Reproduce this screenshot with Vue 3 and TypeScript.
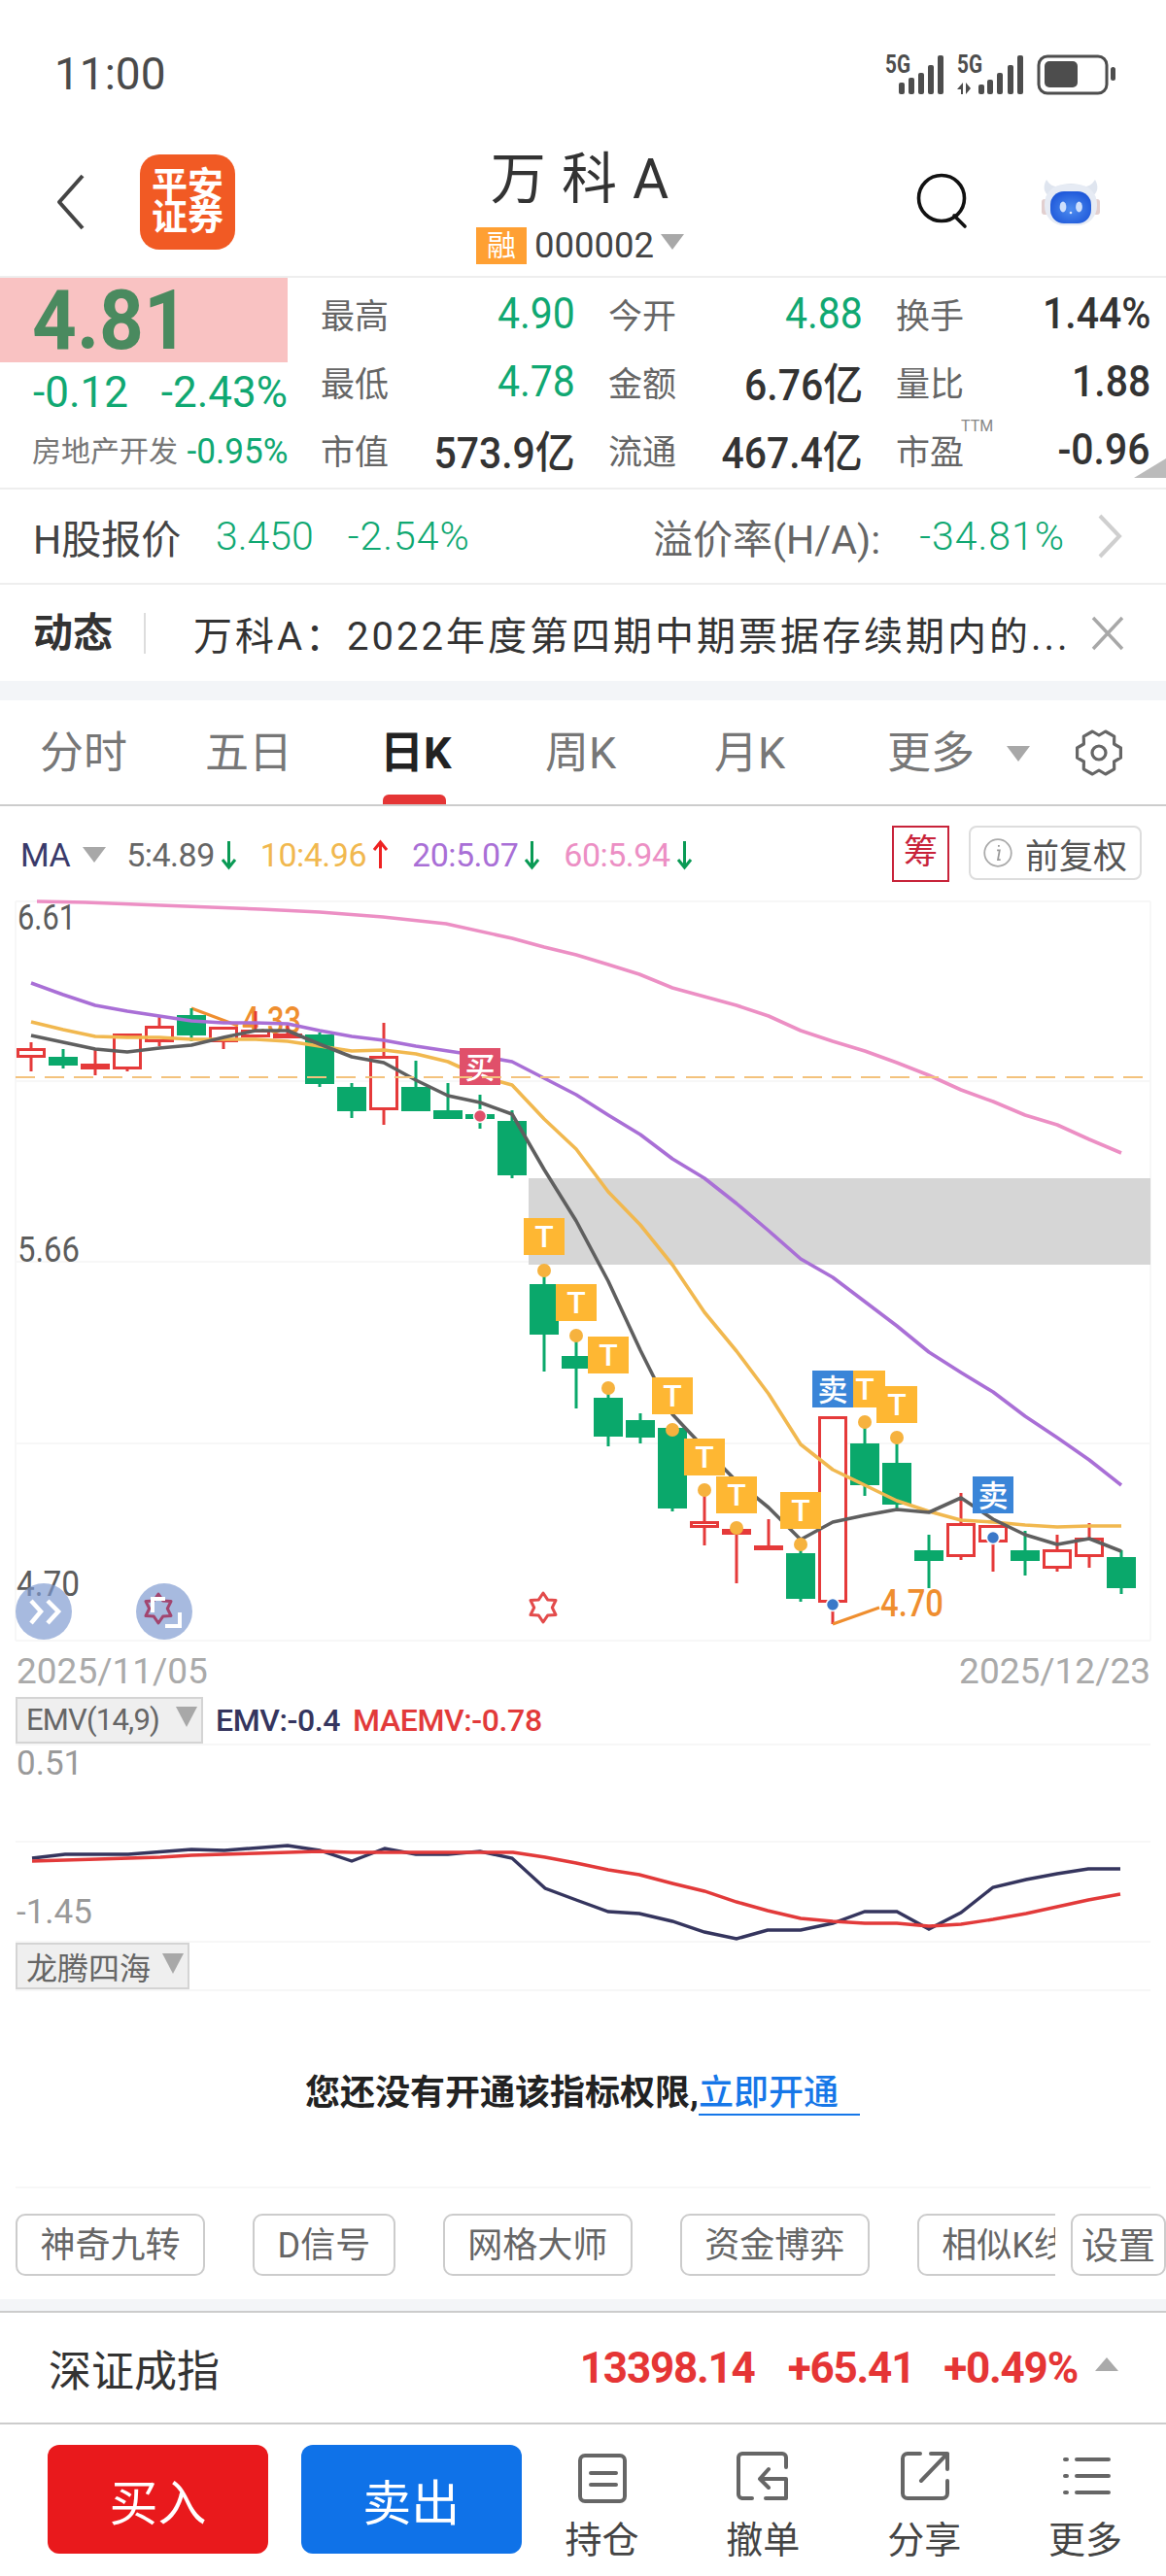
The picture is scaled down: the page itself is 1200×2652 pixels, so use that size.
<script setup lang="ts">
type Candle = [number, number, number, number, 'r' | 'g'];

const xOf = (i: number) => 32 + 33 * i;

// wick top, body top, body bottom, wick bottom
const candles: Candle[] = [
  [1073, 1079, 1089, 1103, 'r'],
  [1080, 1088, 1097, 1100, 'g'],
  [1081, 1095, 1101, 1107, 'r'],
  [1064, 1064, 1101, 1103, 'r'],
  [1047, 1056, 1073, 1077, 'r'],
  [1038, 1045, 1066, 1072, 'g'],
  [1057, 1057, 1073, 1080, 'r'],
  [1041, 1060, 1068, 1068, 'r'],
  [1053, 1064, 1069, 1069, 'r'],
  [1063, 1065, 1116, 1119, 'g'],
  [1115, 1119, 1144, 1151, 'g'],
  [1053, 1087, 1143, 1158, 'r'],
  [1092, 1119, 1144, 1144, 'g'],
  [1115, 1143, 1152, 1152, 'g'],
  [1127, 1147, 1152, 1162, 'g'],
  [1143, 1154, 1210, 1213, 'g'],
  [1313, 1322, 1374, 1412, 'g'],
  [1380, 1396, 1409, 1450, 'g'],
  [1435, 1439, 1479, 1489, 'g'],
  [1455, 1462, 1480, 1486, 'g'],
  [1470, 1470, 1553, 1556, 'g'],
  [1539, 1566, 1573, 1591, 'r'],
  [1573, 1574, 1580, 1630, 'r'],
  [1564, 1591, 1596, 1596, 'r'],
  [1594, 1599, 1646, 1649, 'g'],
  [1458, 1458, 1650, 1672, 'r'],
  [1468, 1486, 1529, 1540, 'g'],
  [1485, 1506, 1549, 1553, 'g'],
  [1580, 1596, 1607, 1635, 'g'],
  [1537, 1568, 1603, 1606, 'r'],
  [1570, 1570, 1588, 1618, 'r'],
  [1576, 1596, 1607, 1622, 'g'],
  [1580, 1595, 1615, 1618, 'r'],
  [1568, 1583, 1603, 1614, 'r'],
  [1596, 1603, 1635, 1641, 'g'],
];

const ma5 = [1066, 1073, 1080, 1083, 1079, 1076, 1068, 1061, 1061, 1075, 1088, 1094, 1112, 1128, 1135, 1147, 1204, 1257, 1319, 1390, 1456, 1491, 1525, 1552, 1585, 1567, 1560, 1554, 1557, 1542, 1564, 1580, 1590, 1584, 1597];
const ma10 = [1052, 1060, 1067, 1068, 1068, 1070, 1070, 1070, 1072, 1077, 1082, 1081, 1085, 1093, 1108, 1117, 1152, 1183, 1227, 1261, 1302, 1351, 1391, 1435, 1487, 1513, 1529, 1545, 1556, 1565, 1567, 1570, 1572, 1571, 1571];
const ma20 = [1012, 1024, 1035, 1041, 1046, 1051, 1053, 1053, 1054, 1061, 1067, 1071, 1077, 1082, 1087, 1093, 1110, 1127, 1148, 1168, 1193, 1213, 1239, 1267, 1296, 1315, 1340, 1365, 1392, 1413, 1433, 1458, 1480, 1503, 1529];
const ma60 = [
  [38, 928], [88, 929], [165, 932], [191, 933], [268, 936], [329, 939], [394, 944], [459, 951], [527, 966], [560, 975],
  [593, 983], [626, 993], [658, 1003], [692, 1017], [725, 1026], [758, 1035], [791, 1046], [824, 1061], [857, 1072],
  [890, 1082], [923, 1094], [956, 1107], [989, 1122], [1022, 1134], [1055, 1148], [1088, 1158], [1121, 1173], [1154, 1187],
];

const seriesPts = (ys: number[]) => ys.map((y, i) => `${xOf(i)},${y}`).join(' ');
const pairPts = (pts: number[][]) => pts.map((p) => p.join(',')).join(' ');

const maLines = [
  { color: '#ec8fc4', pts: pairPts(ma60) },
  { color: '#a96fd6', pts: seriesPts(ma20) },
  { color: '#f1b84f', pts: seriesPts(ma10) },
  { color: '#5f5f5f', pts: seriesPts(ma5) },
];

const tBadges = [
  [16, 1254], [17, 1322], [18, 1376], [20, 1418], [21, 1481], [22, 1520], [24, 1536], [26, 1411], [27, 1427],
];
const tDots = [
  [16, 1308], [17, 1375], [18, 1429], [20, 1472], [21, 1534], [22, 1573], [24, 1590], [26, 1464], [27, 1480],
];
const sellBadges = [
  [25, 1411], [30, 1520],
];

const emvLine = [
  [33, 1913], [67, 1909], [132, 1909], [197, 1904], [231, 1905], [296, 1900], [329, 1905], [362, 1916], [396, 1903], [428, 1909],
  [461, 1909], [494, 1906], [527, 1913], [561, 1944], [593, 1956], [626, 1968], [658, 1970], [692, 1978], [725, 1989], [758, 1996],
  [790, 1987], [824, 1987], [857, 1980], [890, 1968], [923, 1968], [956, 1986], [989, 1969], [1022, 1943], [1056, 1935], [1088, 1929],
  [1120, 1924], [1153, 1924],
];
const maemvLine = [
  [33, 1916], [100, 1914], [165, 1912], [197, 1910], [264, 1908], [329, 1906], [362, 1907], [528, 1907], [561, 1912], [593, 1918],
  [626, 1925], [658, 1930], [692, 1939], [725, 1947], [758, 1958], [790, 1967], [824, 1975], [857, 1978], [890, 1980], [923, 1980],
  [956, 1983], [989, 1981], [1022, 1976], [1056, 1970], [1088, 1963], [1120, 1956], [1153, 1950],
];

const polar = (cx: number, cy: number, r: number, deg: number) => {
  const a = (deg * Math.PI) / 180;
  return `${(cx + r * Math.cos(a)).toFixed(1)},${(cy + r * Math.sin(a)).toFixed(1)}`;
};

// six flat lobes with a notch between them
const gearPts = Array.from({ length: 6 }, (_, k) => {
  const deg = k * 60;
  return [polar(25, 25, 23, deg - 13), polar(25, 25, 23, deg + 13), polar(25, 25, 18, deg + 30)].join(' ');
}).join(' ');

const starPts = (cx: number, cy: number, r: number) =>
  Array.from({ length: 12 }, (_, i) => polar(cx, cy, i % 2 === 0 ? r : r * 0.62, i * 30 - 90)).join(' ');

const quoteRows = [
  { label: '最高', value: '4.90', cls: 'green' },
  { label: '今开', value: '4.88', cls: 'green' },
  { label: '换手', value: '1.44%', cls: 'dark' },
  { label: '最低', value: '4.78', cls: 'green' },
  { label: '金额', value: '6.76亿', cls: 'dark' },
  { label: '量比', value: '1.88', cls: 'dark' },
  { label: '市值', value: '573.9亿', cls: 'dark' },
  { label: '流通', value: '467.4亿', cls: 'dark' },
  { label: '市盈', value: '-0.96', cls: 'dark', ttm: true },
];

const maItems = [
  { text: '5:4.89', color: '#666666', up: false },
  { text: '10:4.96', color: '#f1b84f', up: true },
  { text: '20:5.07', color: '#a96fd6', up: false },
  { text: '60:5.94', color: '#ec8fc4', up: false },
];

const tabs = ['分时', '五日', '日K', '周K', '月K'];
const tools = ['神奇九转', 'D信号', '网格大师', '资金博弈', '相似K线'];
</script>

<template>
  <div class="page">
    <div class="status">
      <span class="time">11:00</span>
      <svg class="status-icons" width="250" height="60" viewBox="905 45 250 60">
        <g fill="#4d4d4d">
          <text x="911" y="75" class="net" textLength="26" lengthAdjust="spacingAndGlyphs">5G</text>
          <rect x="925" y="85" width="6" height="12" rx="2" />
          <rect x="935" y="80" width="6" height="17" rx="2" />
          <rect x="945" y="75" width="6" height="22" rx="2" />
          <rect x="955" y="67" width="6" height="30" rx="2" />
          <rect x="965" y="57" width="6" height="40" rx="2" />
          <text x="985" y="75" class="net" textLength="26" lengthAdjust="spacingAndGlyphs">5G</text>
          <path d="M991 85v12h-2v-5h-4zM994 85l5 6-5 6z" />
          <rect x="1007" y="87" width="6" height="10" rx="2" />
          <rect x="1016" y="82" width="6" height="15" rx="2" />
          <rect x="1026" y="75" width="6" height="22" rx="2" />
          <rect x="1037" y="67" width="6" height="30" rx="2" />
          <rect x="1047" y="57" width="6" height="40" rx="2" />
          <rect x="1069" y="58" width="70" height="38" rx="9" fill="none" stroke="#4d4d4d" stroke-width="3" />
          <rect x="1075" y="63" width="34" height="27" rx="5" />
          <rect x="1143" y="69" width="5" height="14" rx="2.5" />
        </g>
      </svg>
    </div>

    <header class="head">
      <div class="head-left">
        <svg width="34" height="60" viewBox="0 0 34 60">
          <path d="M30 3 L6 30 L30 57" fill="none" stroke="#444" stroke-width="4" stroke-linejoin="round" />
        </svg>
        <div class="logo">平安<br />证券</div>
      </div>
      <div class="head-mid">
        <div class="title">万 科 A</div>
        <div class="code-row">
          <span class="rong">融</span>
          <span class="code">000002</span>
          <i class="tri" />
        </div>
      </div>
      <div class="head-right">
        <svg width="60" height="60" viewBox="0 0 60 60">
          <circle cx="28" cy="26" r="23.5" fill="none" stroke="#111" stroke-width="3.6" />
          <path d="M41 44 L52 55" stroke="#111" stroke-width="3.6" stroke-linecap="round" />
        </svg>
        <svg class="robot" width="60" height="50" viewBox="0 0 60 50">
          <defs>
            <radialGradient id="visor" cx="50%" cy="55%" r="60%">
              <stop offset="0%" stop-color="#4f8ef0" />
              <stop offset="100%" stop-color="#1c55d8" />
            </radialGradient>
          </defs>
          <path d="M5 2 C1 9 2 15 8 19 L52 19 C58 15 59 9 55 2 C51 8 48 9 44 9 C36 5 24 5 16 9 C12 9 9 8 5 2Z" fill="#dfe5ef" />
          <rect x="0" y="22" width="7" height="16" rx="3" fill="#e2cfcf" />
          <rect x="53" y="22" width="7" height="16" rx="3" fill="#e2cfcf" />
          <rect x="3" y="7" width="54" height="42" rx="20" fill="#e6ebf4" />
          <rect x="9" y="14" width="42" height="33" rx="14" fill="url(#visor)" />
          <ellipse cx="22" cy="30" rx="3.4" ry="5.4" fill="#cfe0fc" />
          <ellipse cx="38.5" cy="30" rx="3.4" ry="5.4" fill="#cfe0fc" />
          <circle cx="30" cy="36" r="1.3" fill="#dce8fd" />
        </svg>
      </div>
    </header>

    <section class="quote">
      <div class="quote-left">
        <div class="price"><span>4.81</span></div>
        <div class="change green"><span>-0.12</span><span>-2.43%</span></div>
        <div class="sector"><span>房地产开发</span><span class="n sector-num green">-0.95%</span></div>
      </div>
      <div class="quote-grid">
        <div v-for="row in quoteRows" :key="row.label" class="cell">
          <span class="label">{{ row.label }}<sup v-if="row.ttm" class="ttm">TTM</sup></span>
          <span class="n" :class="row.cls">{{ row.value }}</span>
        </div>
      </div>
      <i class="corner" />
    </section>

    <div class="hrow">
      <span class="h-name">H股报价</span>
      <span class="h-num green">3.450</span>
      <span class="h-num wide green second">-2.54%</span>
      <span class="premium">溢价率(H/A):</span>
      <span class="h-num wide green last">-34.81%</span>
      <svg width="28" height="46" viewBox="0 0 28 46">
        <path d="M3 2 L23 23 L3 44" fill="none" stroke="#cfcfcf" stroke-width="4" />
      </svg>
    </div>

    <div class="news">
      <span class="news-tag">动态</span>
      <span class="news-text">万科A：2022年度第四期中期票据存续期内的...</span>
      <svg width="34" height="36" viewBox="0 0 34 36">
        <path d="M2 2 L32 34 M32 2 L2 34" stroke="#a8a8a8" stroke-width="3.4" />
      </svg>
    </div>

    <div class="gap" />

    <nav class="tabs">
      <span v-for="t in tabs" :key="t" class="tab" :class="{ active: t === '日K' }">{{ t }}</span>
      <span class="tab more">更多<i class="tri" /></span>
      <svg class="gear" width="50" height="50" viewBox="0 0 50 50">
        <polygon :points="gearPts" fill="none" stroke="#666" stroke-width="3.2" stroke-linejoin="round" />
        <circle cx="25" cy="25" r="7" fill="none" stroke="#666" stroke-width="3.2" />
      </svg>
    </nav>

    <div class="ma-row">
      <span class="ma-name">MA</span>
      <i class="tri ma-tri" />
      <span v-for="m in maItems" :key="m.text" class="ma-item" :style="{ color: m.color }">
        {{ m.text }}
        <svg width="17" height="32" viewBox="0 0 17 32">
          <path
            :d="m.up ? 'M8.5 30V4M2 11L8.5 3L15 11' : 'M8.5 2V28M2 21L8.5 29L15 21'"
            fill="none"
            :stroke="m.up ? '#ee2222' : '#0a9a55'"
            stroke-width="3"
          />
        </svg>
      </span>
      <span class="chou">筹</span>
      <span class="fq">
        <svg width="32" height="32" viewBox="0 0 36 36">
          <circle cx="18" cy="18" r="15.5" fill="none" stroke="#aaa" stroke-width="2" />
          <path d="M19 9v2M17 15h3l-2 11h3" fill="none" stroke="#999" stroke-width="2" />
        </svg>
        前复权
      </span>
    </div>

    <svg class="chart" width="1200" height="841" viewBox="0 905 1200 841">
      <path
        d="M16 928H1184M16 1113H1184M16 1299H1184M16 1486H1184M16 1689H1184M16 928V1689M1184 928V1689"
        stroke="#f7f7f7"
        stroke-width="2"
        fill="none"
      />
      <rect x="544" y="1213" width="640" height="89" fill="#d6d6d6" />
      <text x="18" y="957" class="axis" textLength="60" lengthAdjust="spacingAndGlyphs">6.61</text>
      <text x="18" y="1299" class="axis" textLength="64" lengthAdjust="spacingAndGlyphs">5.66</text>
      <text x="17" y="1643" class="axis" textLength="65" lengthAdjust="spacingAndGlyphs">4.70</text>

      <text x="249" y="1064" class="mark" textLength="61" lengthAdjust="spacingAndGlyphs">4.33</text>
      <path d="M197 1038 L245 1056" stroke="#ef8e2f" stroke-width="3" fill="none" />

      <g v-for="(c, i) in candles" :key="i">
        <line
          :x1="xOf(i)"
          :x2="xOf(i)"
          :y1="c[0]"
          :y2="c[3]"
          :stroke="c[4] === 'r' ? '#e53a3a' : '#0aa86b'"
          stroke-width="3"
        />
        <rect
          v-if="c[4] === 'g'"
          :x="xOf(i) - 15"
          :y="c[1]"
          width="30"
          :height="c[2] - c[1]"
          fill="#0aa86b"
        />
        <rect
          v-else
          :x="xOf(i) - 13.5"
          :y="c[1] + 1.5"
          width="27"
          :height="c[2] - c[1] - 3"
          fill="#fff"
          stroke="#e53a3a"
          stroke-width="3"
        />
      </g>

      <polyline
        v-for="l in maLines"
        :key="l.color"
        :points="l.pts"
        :stroke="l.color"
        stroke-width="3.6"
        fill="none"
        stroke-linejoin="round"
      />

      <circle v-for="d in tDots" :key="d[0]" :cx="xOf(d[0])" :cy="d[1]" r="7" fill="#f6b23e" />
      <circle cx="494" cy="1149" r="6.5" fill="#e0506a" stroke="#fff" stroke-width="1.5" />
      <circle cx="857" cy="1652" r="6.5" fill="#3a78c8" stroke="#fff" stroke-width="1.5" />
      <circle cx="1022" cy="1583" r="6.5" fill="#3a78c8" stroke="#fff" stroke-width="1.5" />

      <g v-for="b in tBadges" :key="b[0]">
        <rect :x="xOf(b[0]) - 21" :y="b[1]" width="42" height="38" fill="#feb733" />
        <text :x="xOf(b[0])" :y="b[1] + 30" class="badge">T</text>
      </g>
      <g v-for="b in sellBadges" :key="b[0]">
        <rect :x="xOf(b[0]) - 21" :y="b[1]" width="42" height="38" fill="#3a85d8" />
        <text :x="xOf(b[0])" :y="b[1] + 31" class="badge cjk">卖</text>
      </g>
      <rect x="473" y="1079" width="42" height="38" fill="#e0506a" />
      <text x="494" y="1110" class="badge cjk">买</text>

      <path d="M16 1109H1180" stroke="#f3c27d" stroke-width="2" stroke-dasharray="20 10" fill="none" />

      <path d="M857 1672 L905 1655" stroke="#ef8e2f" stroke-width="3" fill="none" />
      <text x="906" y="1664" class="mark" textLength="65" lengthAdjust="spacingAndGlyphs">4.70</text>

      <polygon :points="starPts(559, 1655, 15)" fill="none" stroke="#e34b4b" stroke-width="3" stroke-linejoin="round" />

      <circle cx="45" cy="1659" r="29" fill="#7e9ad0" opacity="0.68" />
      <path d="M32 1648L42 1659L32 1671M49 1648L60 1659L49 1671" fill="none" stroke="#fff" stroke-width="4.5" />
      <circle cx="169" cy="1659" r="29" fill="#7e9ad0" opacity="0.68" />
      <polygon :points="starPts(163, 1656, 15)" fill="none" stroke="#a2456f" stroke-width="3" stroke-linejoin="round" />
      <path d="M170 1646H157V1660M185 1660V1674H170" fill="none" stroke="#fff" stroke-width="4" />

      <text x="17" y="1733" class="date">2025/11/05</text>
      <text x="1184" y="1733" class="date end">2025/12/23</text>
    </svg>

    <div class="emv-head">
      <span class="pick">EMV(14,9)<i class="tri" /></span>
      <span class="emv-val navy">EMV:-0.4</span>
      <span class="emv-val red">MAEMV:-0.78</span>
    </div>

    <svg class="chart" width="1200" height="205" viewBox="0 1795 1200 205">
      <path d="M16 1796H1184M16 1896H1184M16 1999H1184" stroke="#f7f7f7" stroke-width="2" fill="none" />
      <text x="17" y="1827" class="axis small">0.51</text>
      <text x="17" y="1980" class="axis small">-1.45</text>
      <polyline :points="pairPts(emvLine)" stroke="#35355e" stroke-width="3.4" fill="none" />
      <polyline :points="pairPts(maemvLine)" stroke="#e23a3a" stroke-width="3.4" fill="none" />
    </svg>

    <div class="locked">
      <div class="pick-row"><span class="pick">龙腾四海<i class="tri" /></span></div>
      <p class="lock-msg">您还没有开通该指标权限,<a class="open">立即开通</a></p>
    </div>

    <div class="tools">
      <div class="tool-scroll">
        <span v-for="t in tools" :key="t" class="tool">{{ t }}</span>
      </div>
      <span class="tool setting">设置</span>
    </div>

    <div class="gap low" />

    <div class="index">
      <span class="index-name">深证成指</span>
      <span class="index-num first">13398.14</span>
      <span class="index-num second">+65.41</span>
      <span class="index-num third">+0.49%</span>
      <i class="tri up" />
    </div>

    <footer class="bottom">
      <button type="button" class="trade buy">买入</button>
      <button type="button" class="trade sell">卖出</button>
      <div class="act">
        <svg width="56" height="56" viewBox="0 0 56 56" fill="none" stroke="#666" stroke-width="4" stroke-linecap="round" stroke-linejoin="round">
          <rect x="5" y="5" width="46" height="47" rx="5" />
          <path d="M16 23H42M16 35H42" />
        </svg>
        <span>持仓</span>
      </div>
      <div class="act">
        <svg width="56" height="56" viewBox="0 0 56 56" fill="none" stroke="#666" stroke-width="4" stroke-linecap="round" stroke-linejoin="round">
          <path d="M17 49H7a4 4 0 0 1-4-4V7a4 4 0 0 1 4-4H48a4 4 0 0 1 4 4V17" />
          <path d="M31 49H52V29H25M34 19L25 29L34 38" />
        </svg>
        <span>撤单</span>
      </div>
      <div class="act">
        <svg width="56" height="56" viewBox="0 0 56 56" fill="none" stroke="#666" stroke-width="4" stroke-linecap="round" stroke-linejoin="round">
          <path d="M24 3H11a5 5 0 0 0-5 5V44a5 5 0 0 0 5 5H47a5 5 0 0 0 5-5V31" />
          <path d="M25 31L52 3M35 3H52V19" />
        </svg>
        <span>分享</span>
      </div>
      <div class="act">
        <svg width="56" height="56" viewBox="0 0 56 56" fill="none" stroke="#666" stroke-width="4" stroke-linecap="round">
          <path d="M7 9H9M7 26H9M7 43H9M19 9H52M19 26H52M19 43H52" />
        </svg>
        <span>更多</span>
      </div>
    </footer>
  </div>
</template>

<style scoped>
.page {
  width: 1200px;
  height: 2652px;
  overflow: hidden;
  background: #fff;
  color: #333;
  font-family: Roboto, "Noto Sans CJK SC", sans-serif;
}
/* the app's digits are narrower than Roboto */
.n {
  display: inline-block;
  font-size: 45px;
  transform: scaleX(0.91);
  transform-origin: right center;
  white-space: nowrap;
}
.green { color: #10a872; }
.dark { color: #333; font-weight: 500; }
.tri {
  display: inline-block;
  width: 0;
  height: 0;
  border-left: 12px solid transparent;
  border-right: 12px solid transparent;
  border-top: 16px solid #a8a8a8;
}

.status {
  height: 140px;
  display: flex;
  justify-content: space-between;
  padding: 47px 45px 0 56px;
  box-sizing: border-box;
}
.time {
  font-size: 46px;
  line-height: 58px;
  color: #4a4a4a;
}
.status-icons { margin-top: -2px; }
.net {
  font-weight: 700;
  font-size: 25px;
}

.head {
  height: 146px;
  box-sizing: border-box;
  border-bottom: 2px solid #eee;
  display: grid;
  grid-template-columns: 1fr auto 1fr;
  align-items: start;
}
.head-left {
  display: flex;
  align-items: center;
  padding: 19px 0 0 55px;
}
.logo {
  width: 98px;
  height: 98px;
  margin-left: 55px;
  border-radius: 20px;
  background: #f15a24;
  color: #fff;
  font-weight: 700;
  font-size: 37px;
  line-height: 33px;
  text-align: center;
  padding-top: 16px;
  box-sizing: border-box;
}
.head-mid {
  display: flex;
  flex-direction: column;
  align-items: center;
  padding-top: 9px;
  margin-right: 6px;
}
.title {
  font-size: 57px;
  letter-spacing: 1px;
  line-height: 72px;
  color: #333;
}
.code-row {
  display: flex;
  align-items: center;
  margin-top: 10px;
}
.rong {
  width: 52px;
  height: 38px;
  background: #ffa033;
  color: #fff;
  font-size: 30px;
  line-height: 38px;
  text-align: center;
}
.code {
  font-size: 36.5px;
  margin-left: 8px;
  color: #444;
}
.code-row .tri { margin: -8px 0 0 7px; }
.head-right {
  display: flex;
  align-items: center;
  justify-content: flex-end;
  gap: 71px;
  padding: 38px 68px 0 0;
}

.quote {
  position: relative;
  height: 218px;
  box-sizing: border-box;
  border-bottom: 2px solid #eee;
  display: flex;
}
.quote-left { width: 296px; }
.price {
  height: 87px;
  background: #f9c2c2;
  color: #4a8a5f;
  font-weight: 700;
  font-size: 86px;
  line-height: 87px;
  padding-left: 33px;
}
.price span {
  display: inline-block;
  transform: scaleX(0.93);
  transform-origin: left center;
}
.change {
  display: flex;
  justify-content: space-between;
  padding-left: 34px;
  line-height: 62px;
  font-size: 44px;
}
.sector {
  display: flex;
  justify-content: space-between;
  align-items: center;
  padding-left: 33px;
  line-height: 60px;
  font-size: 30px;
  color: #777;
}
.sector-num {
  font-size: 37px;
  transform: scaleX(0.95);
}
.quote-grid {
  flex: 1;
  display: grid;
  grid-template-columns: repeat(3, 262px);
  grid-auto-rows: 70px;
  column-gap: 34px;
  padding: 1px 0 0 34px;
}
.cell {
  display: flex;
  justify-content: space-between;
  align-items: center;
}
.label {
  position: relative;
  font-size: 35px;
  color: #666;
}
.ttm {
  position: absolute;
  left: 67px;
  top: -8px;
  font-size: 16px;
  color: #888;
}
.corner {
  position: absolute;
  right: 0;
  bottom: 10px;
  width: 0;
  height: 0;
  border-left: 33px solid transparent;
  border-bottom: 20px solid #bbb;
}

.hrow {
  height: 98px;
  box-sizing: border-box;
  border-bottom: 2px solid #eee;
  display: flex;
  align-items: center;
  padding: 0 43px 0 34px;
}
.h-name {
  width: 188px;
  font-size: 41px;
  color: #444;
  white-space: nowrap;
}
.h-num {
  font-size: 41px;
  font-weight: 300;
}
.h-num.wide { letter-spacing: 1px; }
.h-num.second { margin-left: 35px; }
.premium {
  margin-left: auto;
  font-size: 41px;
  color: #666;
}
.h-num.last { margin: 0 33px 0 40px; }

.news {
  height: 99px;
  display: flex;
  align-items: center;
  padding: 0 43px 0 34px;
}
.news-tag {
  width: 116px;
  height: 42px;
  border-right: 2px solid #ddd;
  margin-right: 49px;
  font-size: 41px;
  line-height: 42px;
  font-weight: 700;
  color: #333;
  box-sizing: border-box;
}
.news-text {
  flex: 1;
  font-size: 40px;
  letter-spacing: 3px;
  white-space: nowrap;
  color: #333;
}

.gap {
  height: 20px;
  background: #f3f5f8;
}
.gap.low {
  height: 14px;
  box-sizing: border-box;
  border-bottom: 2px solid #ccc;
}

.tabs {
  position: relative;
  height: 109px;
  box-sizing: border-box;
  border-bottom: 2px solid #ccc;
  display: grid;
  grid-template-columns: 170px 180px 170px 174px 178px auto;
  padding: 27px 0 0 41px;
  justify-content: start;
}
.tab {
  position: relative;
  font-size: 45px;
  line-height: 56px;
  color: #777;
}
.tab.active {
  font-weight: 700;
  color: #222;
}
.tab.active::after {
  content: "";
  position: absolute;
  left: 3px;
  top: 70px;
  width: 65px;
  height: 10px;
  border-radius: 6px 6px 0 0;
  background: #e53535;
}
.tab.more .tri { margin: 0 0 6px 33px; vertical-align: middle; }
.gear {
  position: absolute;
  left: 1106px;
  top: 29px;
}

.ma-row {
  height: 75px;
  display: flex;
  align-items: center;
  padding: 24px 25px 0 21px;
  box-sizing: border-box;
  font-size: 34px;
  letter-spacing: -0.5px;
}
.ma-name { color: #3a3a6a; }
.ma-tri { margin: 0 21px 0 13px; }
.ma-item {
  display: flex;
  align-items: center;
  gap: 6px;
  margin-right: 24px;
}
.chou {
  width: 59px;
  height: 58px;
  box-sizing: border-box;
  border: 2px solid #c8233a;
  color: #c8233a;
  font-size: 35px;
  line-height: 52px;
  text-align: center;
  margin: -4px 20px 0 auto;
  align-self: flex-start;
  letter-spacing: 0;
}
.fq {
  width: 178px;
  height: 56px;
  box-sizing: border-box;
  border: 2px solid #ddd;
  border-radius: 8px;
  margin-top: -4px;
  align-self: flex-start;
  display: flex;
  align-items: center;
  gap: 12px;
  padding-left: 12px;
  font-size: 35px;
  letter-spacing: 0;
  color: #555;
  white-space: nowrap;
}

.chart { display: block; }
.axis {
  font-size: 37px;
  fill: #5c5c5c;
}
.axis.small {
  font-size: 35px;
  fill: #999;
}
.mark {
  font-size: 38px;
  font-weight: 500;
  fill: #ef8e2f;
}
.badge {
  font-size: 32px;
  font-weight: 500;
  fill: #fff;
  text-anchor: middle;
}
.badge.cjk { font-size: 31px; }
.date {
  font-size: 37px;
  fill: #aaa;
}
.date.end { text-anchor: end; }

.emv-head {
  height: 49px;
  display: flex;
  align-items: center;
  padding-left: 16px;
}
.pick {
  height: 48px;
  box-sizing: border-box;
  border: 2px solid #d4d4d4;
  background: #efefef;
  display: inline-flex;
  align-items: center;
  gap: 17px;
  padding: 0 4px 0 9px;
  font-size: 31px;
  letter-spacing: -0.8px;
  color: #666;
}
.pick .tri {
  border-left-width: 11px;
  border-right-width: 11px;
  border-top-width: 21px;
  margin-top: -6px;
}
.emv-val {
  font-size: 32px;
  font-weight: 500;
  margin-left: 13px;
  letter-spacing: -0.4px;
}
.navy { color: #35355e; }
.red { color: #e23a3a; }

.locked {
  height: 253px;
  box-sizing: border-box;
  border-bottom: 2px solid #f7f7f7;
  margin: 0 16px;
}
.pick-row {
  height: 50px;
  border-bottom: 2px solid #f7f7f7;
  box-sizing: border-box;
}
.pick-row .pick {
  font-size: 32px;
  letter-spacing: 0;
  gap: 12px;
}
.lock-msg {
  margin: 80px 0 0 298px;
  font-size: 36px;
  line-height: 50px;
  font-weight: 700;
  color: #222;
}
.open {
  display: inline-block;
  padding-right: 22px;
  border-bottom: 2px solid #1677e8;
  line-height: 42px;
  font-weight: 500;
  color: #1677e8;
}

.tools {
  height: 114px;
  box-sizing: border-box;
  display: flex;
  padding-top: 26px;
}
.tool-scroll {
  width: 1086px;
  display: flex;
  gap: 49px;
  padding-left: 16px;
  box-sizing: border-box;
  overflow: hidden;
  flex: none;
}
.tool {
  flex: none;
  height: 64px;
  box-sizing: border-box;
  border: 2px solid #ccc;
  border-radius: 10px;
  padding: 0 23.5px;
  font-size: 36px;
  line-height: 62px;
  color: #666;
  white-space: nowrap;
}
.tool.setting {
  margin-left: 16px;
  padding: 0 9px;
  font-size: 38px;
}

.index {
  height: 115px;
  box-sizing: border-box;
  border-bottom: 2px solid #ccc;
  display: flex;
  align-items: center;
  padding-left: 50px;
}
.index-name {
  font-size: 44px;
  color: #333;
}
.index-num {
  font-size: 44px;
  font-weight: 700;
  letter-spacing: -1.2px;
  color: #e53535;
}
.index-num.first { margin-left: auto; }
.index-num.second { margin-left: 34px; }
.index-num.third { margin-left: 30px; }
.index .tri.up {
  margin: -8px 49px 0 18px;
  border-top: none;
  border-bottom: 14px solid #aaa;
}

.bottom {
  height: 156px;
  display: flex;
  padding: 21px 0 0 49px;
  box-sizing: border-box;
}
.trade {
  width: 227px;
  height: 112px;
  border: none;
  border-radius: 12px;
  color: #fff;
  font-family: "Noto Sans CJK SC", sans-serif;
  font-size: 50px;
  margin-right: 34px;
}
.buy { background: #e9191c; }
.sell { background: #0f72e8; }
.act {
  width: 166px;
  display: flex;
  flex-direction: column;
  align-items: center;
  font-size: 38px;
  color: #444;
  line-height: 44px;
}
.trade.sell + .act { margin-left: -34px; }
.act svg { margin-top: 6px; margin-bottom: 14px; }
</style>
